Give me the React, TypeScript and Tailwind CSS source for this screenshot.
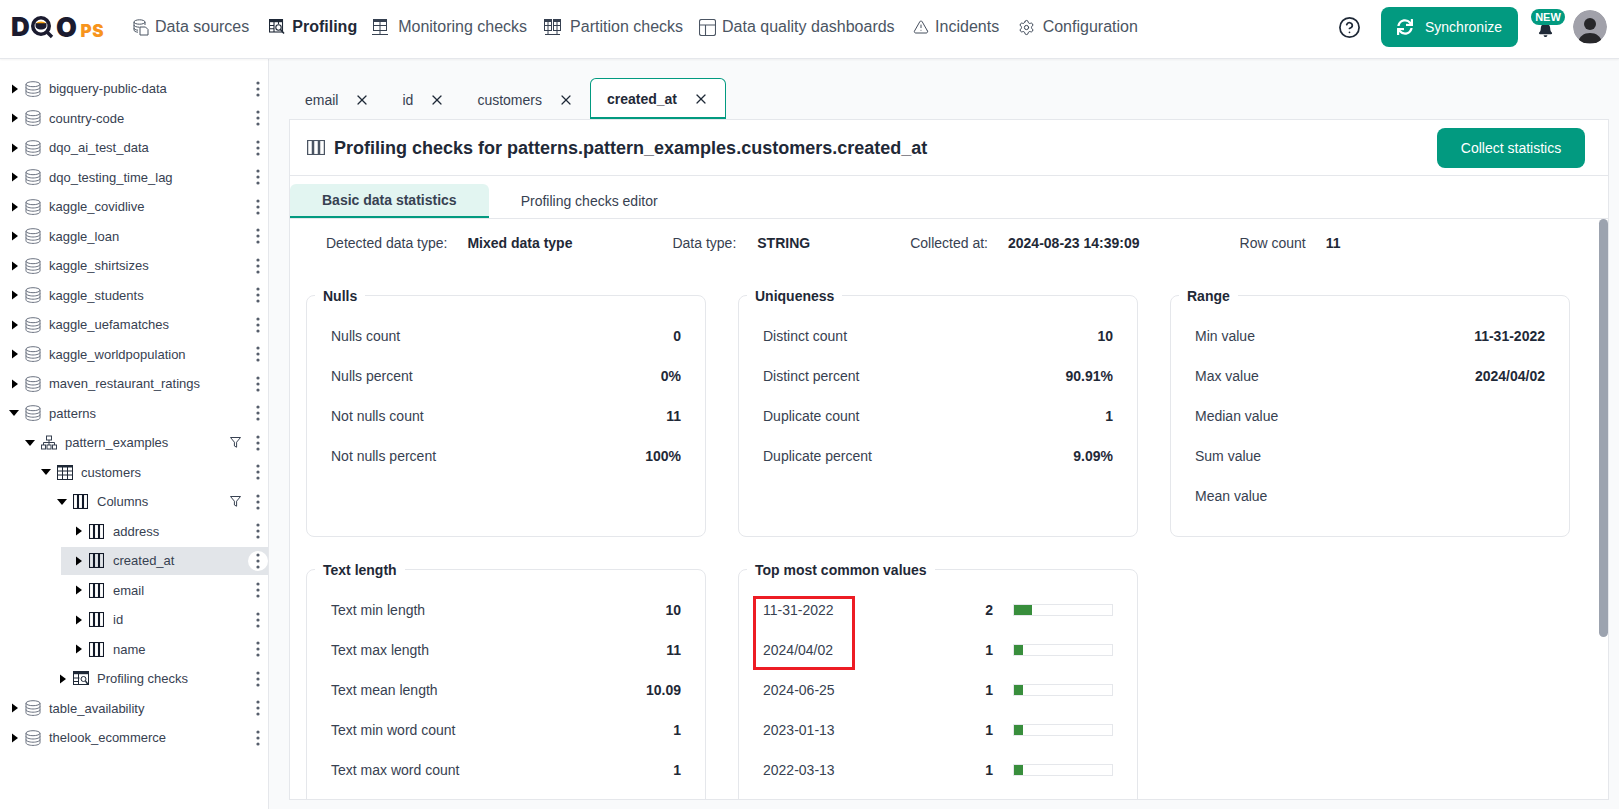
import React from "react";
import { X, TriangleAlert, Settings, CircleHelp } from "lucide-react";
import { FaSync, FaBell } from "react-icons/fa";

const Db = () => (
  <svg width="16" height="16" viewBox="0 0 16 16" fill="none" stroke="#6b7280" strokeWidth="1">
    <ellipse cx="8" cy="3.2" rx="7" ry="2.5" />
    <path d="M1 3.2v9.6c0 1.4 3.1 2.6 7 2.6s7-1.2 7-2.6V3.2" />
    <path d="M1 6.4c0 1.4 3.1 2.6 7 2.6s7-1.2 7-2.6" />
    <path d="M1 9.6c0 1.4 3.1 2.6 7 2.6s7-1.2 7-2.6" />
  </svg>
);
const Cols = ({ c = "#111827", w = 15 }: { c?: string; w?: number }) => (
  <svg width={w} height="15" viewBox="0 0 15 15" preserveAspectRatio="none" fill="none" stroke={c} strokeWidth="1.1">
    <rect x="0.5" y="0.5" width="4" height="14" />
    <rect x="5.5" y="0.5" width="4" height="14" />
    <rect x="10.5" y="0.5" width="4" height="14" />
  </svg>
);
const Tbl = () => (
  <svg width="16" height="15" viewBox="0 0 16 15" fill="none" stroke="#1f2937" strokeWidth="1">
    <rect x="0.5" y="0.5" width="15" height="14" />
    <path d="M0.5 1.5h15" strokeWidth="2" />
    <path d="M0.5 6h15M0.5 10h15M5.5 1v13M10.5 1v13" />
  </svg>
);
const Schema = () => (
  <svg width="16" height="15" viewBox="0 0 16 15" fill="none" stroke="#374151" strokeWidth="1">
    <rect x="5.5" y="1" width="5" height="4" />
    <rect x="0.5" y="10" width="4" height="4" />
    <rect x="6" y="10" width="4" height="4" />
    <rect x="11.5" y="10" width="4" height="4" />
    <path d="M8 5v5M2.5 10V7.5h11V10" />
  </svg>
);
const ProfTree = () => (
  <svg width="16" height="15" viewBox="0 0 16 15" fill="none" stroke="#1f2937" strokeWidth="1">
    <rect x="0.5" y="0.5" width="15" height="13" />
    <path d="M0.5 2h15" strokeWidth="2.4" />
    <path d="M0.5 7h6M0.5 10.5h5M5.5 3v10" />
    <circle cx="10.5" cy="8" r="2.5" />
    <path d="M12.5 10l2.5 3.5" strokeWidth="1.4" />
  </svg>
);
const Kebab = () => (
  <svg width="4" height="16" viewBox="0 0 4 16" fill="#565e6b">
    <circle cx="2" cy="2" r="1.6" />
    <circle cx="2" cy="8" r="1.6" />
    <circle cx="2" cy="14" r="1.6" />
  </svg>
);
const Funnel = () => (
  <svg width="11" height="11" viewBox="0 0 11 11" fill="none" stroke="#374151" strokeWidth="1">
    <path d="M0.5 0.5h10L6.6 5.2v5L4.4 9V5.2z" />
  </svg>
);
const Right = () => (
  <svg width="10" height="10" viewBox="0 0 10 10"><path d="M3 0.5l6 4.5-6 4.5z" fill="#000" /></svg>
);
const Down = () => (
  <svg width="10" height="10" viewBox="0 0 10 10"><path d="M0 2h10L5 8z" fill="#000" /></svg>
);

const NavData = () => (
  <svg width="16" height="17" viewBox="0 0 16 17" fill="none" stroke="#4b5563" strokeWidth="1">
    <ellipse cx="6.5" cy="3" rx="5.5" ry="2.2" />
    <path d="M1 3v8c0 1.1 1.6 2 4 2.2M12 3v3M1 6c0 1.2 2.4 2.2 5.5 2.2M1 9c0 1.1 1.6 2 4 2.2" />
    <path d="M7 8h5.5l2.5 2.5V16H7z" fill="#fff" />
  </svg>
);
const NavProf = () => (
  <svg width="16" height="16" viewBox="0 0 16 16" fill="none" stroke="#1f2937" strokeWidth="1.1">
    <rect x="0.5" y="0.5" width="13" height="12.5" />
    <path d="M0.5 2h13" strokeWidth="2.4" />
    <path d="M0.5 6.5h5M0.5 9.8h4M5 3v10M9.5 3v2" />
    <circle cx="9.5" cy="8.5" r="2.7" fill="#fff" />
    <path d="M11.5 10.5l3.5 4" strokeWidth="1.5" />
  </svg>
);
const NavMon = () => (
  <svg width="16" height="17" viewBox="0 0 16 17" fill="none" stroke="#374151" strokeWidth="1">
    <rect x="1.5" y="0.5" width="13" height="11" />
    <path d="M1.5 2h13" strokeWidth="2" />
    <path d="M1.5 6.5h13M8 2v9.5M8 11.5v3.5M0 15.5h16" />
  </svg>
);
const NavPart = () => (
  <svg width="17" height="17" viewBox="0 0 17 17" fill="none" stroke="#374151" strokeWidth="1">
    <rect x="0.5" y="0.5" width="7" height="11" />
    <rect x="9.5" y="0.5" width="7" height="11" />
    <path d="M0.5 2h7M9.5 2h7" strokeWidth="2" />
    <path d="M0.5 6.5h7M9.5 6.5h7M4 2v9.5M13 2v9.5M4 11.5v3.5M13 11.5v3.5M1 15.5h15" />
  </svg>
);
const NavDash = () => (
  <svg width="17" height="17" viewBox="0 0 17 17" fill="none" stroke="#4b5563" strokeWidth="1.1">
    <rect x="0.5" y="0.5" width="16" height="16" rx="2" />
    <path d="M0.5 6h16M6.5 6v10.5" />
  </svg>
);

const nav: { label: string; icon: React.ReactNode; bold?: boolean; cls: string }[] = [
  { label: "Data sources", icon: <NavData />, cls: "ml-0 gap-[6px]" },
  { label: "Profiling", icon: <NavProf />, bold: true, cls: "ml-[19px] gap-[7px]" },
  { label: "Monitoring checks", icon: <NavMon />, cls: "ml-[14px] gap-[10px]" },
  { label: "Partition checks", icon: <NavPart />, cls: "ml-[17px] gap-[9px]" },
  { label: "Data quality dashboards", icon: <NavDash />, cls: "ml-[16px] gap-[6px]" },
  { label: "Incidents", icon: <TriangleAlert size={16} strokeWidth={1.4} color="#374151" />, cls: "ml-[18px] gap-[5.5px]" },
  { label: "Configuration", icon: <Settings size={17} strokeWidth={1.4} color="#374151" />, cls: "ml-[18.5px] gap-[8px]" },
];

type Row = { label: string; level: number; open?: boolean; icon: string; filter?: boolean; selected?: boolean };
const tree: Row[] = [
  ...[
    "bigquery-public-data",
    "country-code",
    "dqo_ai_test_data",
    "dqo_testing_time_lag",
    "kaggle_covidlive",
    "kaggle_loan",
    "kaggle_shirtsizes",
    "kaggle_students",
    "kaggle_uefamatches",
    "kaggle_worldpopulation",
    "maven_restaurant_ratings",
  ].map((label) => ({ label, level: 0, icon: "db" })),
  { label: "patterns", level: 0, open: true, icon: "db" },
  { label: "pattern_examples", level: 1, open: true, icon: "schema", filter: true },
  { label: "customers", level: 2, open: true, icon: "table" },
  { label: "Columns", level: 3, open: true, icon: "cols", filter: true },
  { label: "address", level: 4, icon: "cols" },
  { label: "created_at", level: 4, icon: "cols", selected: true },
  { label: "email", level: 4, icon: "cols" },
  { label: "id", level: 4, icon: "cols" },
  { label: "name", level: 4, icon: "cols" },
  { label: "Profiling checks", level: 3, icon: "prof" },
  { label: "table_availability", level: 0, icon: "db" },
  { label: "thelook_ecommerce", level: 0, icon: "db" },
];
const pads = ["pl-[9px]", "pl-[25px]", "pl-[41px]", "pl-[57px]", "ml-[61px] pl-[12px]"];
const treeIcon = (k: string) =>
  k === "db" ? <Db /> : k === "schema" ? <Schema /> : k === "table" ? <Tbl /> : k === "prof" ? <ProfTree /> : <span className="w-4 flex"><Cols /></span>;

const tabs = ["email", "id", "customers"];

const Card = ({ title, children, cls }: { title: string; children: React.ReactNode; cls: string }) => (
  <fieldset className={`border border-[#e5e7eb] rounded-lg px-6 pt-3 min-w-0 ${cls}`}>
    <legend className="-ml-4 px-2 text-sm font-bold text-[#1f2937] leading-[17px] translate-y-px">{title}</legend>
    {children}
  </fieldset>
);
const Stat = ({ label, value }: { label: string; value?: string }) => (
  <div className="flex items-center justify-between h-10 text-sm">
    <span className="text-[#374151]">{label}</span>
    {value && <span className="font-bold text-[#1f2937]">{value}</span>}
  </div>
);
const Top = ({ label, n, pct }: { label: string; n: number; pct: string }) => (
  <div className="flex items-center h-10 text-sm">
    <span className="text-[#374151] flex-1">{label}</span>
    <span className="font-bold text-[#1f2937] mr-5">{n}</span>
    <div className="w-[100px] h-3 border border-[#e5e7eb]">
      <div className={`h-full bg-[#388e3c] ${pct}`} />
    </div>
  </div>
);

export default function App() {
  return (
    <div className="h-screen flex flex-col overflow-hidden bg-white text-[#374151] [font-family:Liberation_Sans,sans-serif]">
      <header className="h-[59px] shrink-0 flex items-center border-b border-[#e5e7eb] shadow-[0_1px_2px_rgba(0,0,0,0.05)] pl-[11px] pr-3 pb-1 relative z-10">
        <div className="flex items-center w-[93px] h-[24px] text-[#1b1b2f]">
          <span className="[font-family:Inter,sans-serif] font-black text-[26px] leading-none w-[18px]">D</span>
          <svg width="27" height="24" viewBox="0 0 27 24" className="shrink-0">
            <circle cx="12" cy="11" r="8.2" fill="#fff" stroke="#1b1b2f" strokeWidth="3.6" />
            <path d="M6.5 8h11v3c0 2-2.4 3.6-5.5 3.6S6.5 13 6.5 11z" fill="#1b1b2f" />
            <path d="M7 8.2a5.5 3 0 0 1 10 0z" fill="#f59e0b" />
            <path d="M18 17l5 5" stroke="#1b1b2f" strokeWidth="3.4" />
          </svg>
          <span className="[font-family:Inter,sans-serif] font-black text-[27px] leading-none w-[22px]">O</span>
          <span className="[font-family:Inter,sans-serif] font-black text-[17px] leading-none text-[#f7941d] mt-[9px] ml-[3px] tracking-[0.5px]">PS</span>
        </div>
        <nav className="flex items-center ml-[28px] text-base text-[#4b5563]">
          {nav.map((n) => (
            <div key={n.label} className={`flex items-center ${n.cls} ${n.bold ? "font-bold text-[#1f2937]" : ""}`}>
              <span className="w-[17px] flex justify-center">{n.icon}</span>
              <span>{n.label}</span>
            </div>
          ))}
        </nav>
        <div className="ml-auto flex items-center">
          <CircleHelp size={23} strokeWidth={1.8} color="#1f2937" />
          <button className="ml-[20px] h-10 w-[137px] rounded-lg bg-[#029a80] text-white text-sm flex items-center pl-4 gap-3">
            <FaSync size={16} />
            Synchronize
          </button>
          <div className="relative w-[55px] h-10 flex items-center justify-center">
            <FaBell size={15} color="#1f2937" className="mt-1" />
            <span className="absolute top-[2px] left-[13px] w-[34px] h-4 rounded-full bg-[#029a80] text-white text-[11px] font-bold flex items-center justify-center">NEW</span>
          </div>
          <svg width="34" height="34" viewBox="0 0 34 34" className="rounded-full">
            <circle cx="17" cy="17" r="17" fill="#a1a1aa" />
            <circle cx="17" cy="14" r="6" fill="#27272a" />
            <path d="M5 33c1-7 6-10 12-10s11 3 12 10z" fill="#27272a" />
          </svg>
        </div>
      </header>

      <div className="flex-1 flex min-h-0">
        <aside className="w-[269px] shrink-0 border-r border-[#e5e7eb] pt-[15px] text-[13px] text-[#374151]">
          {tree.map((r) => (
            <div
              key={r.label}
              className={`flex items-center ${pads[r.level]} ${r.selected ? "bg-[#e2e5e9] h-[28px] my-[0.75px]" : "h-[29.5px]"}`}
            >
              <span className="w-[10px] flex">{r.open ? <Down /> : <Right />}</span>
              <span className="ml-[6px] flex">{treeIcon(r.icon)}</span>
              <span className="ml-2">{r.label}</span>
              {r.filter && <span className="ml-auto flex mr-[7px]"><Funnel /></span>}
              <span className={`${r.filter ? "" : "ml-auto"} w-5 h-5 flex items-center justify-center rounded-full ${r.selected ? "bg-white" : ""}`}>
                <Kebab />
              </span>
            </div>
          ))}
        </aside>

        <main className="flex-1 min-w-0 bg-[#f9fafb] pt-[19px] pl-5 pr-[10px] pb-[9px] flex flex-col">
          <div className="flex h-[41px] shrink-0 text-sm">
            {tabs.map((t) => (
              <div key={t} className="flex items-center gap-4 px-4 pt-0.5">
                <span>{t}</span>
                <X size={16} strokeWidth={1.8} color="#1f2937" />
              </div>
            ))}
            <div className="flex items-center gap-4 px-4 pt-0.5 bg-white border border-b-2 border-[#029a80] rounded-t-md font-bold text-[#1f2937]">
              <span>created_at</span>
              <X size={16} strokeWidth={1.8} color="#1f2937" />
            </div>
          </div>

          <section className="flex-1 min-h-0 bg-white border border-[#e5e7eb] flex flex-col">
            <div className="h-[56px] shrink-0 border-b border-[#e5e7eb] flex items-center pl-[17px] pr-[23px]">
              <Cols c="#4b5563" w={18} />
              <h1 className="ml-[9px] text-lg font-bold text-[#1f2937]">Profiling checks for patterns.pattern_examples.customers.created_at</h1>
              <button className="ml-auto h-10 w-[148px] rounded-lg bg-[#029a80] text-white text-sm">Collect statistics</button>
            </div>
            <div className="h-[43px] shrink-0 border-b border-[#e5e7eb] flex items-end text-sm pt-2">
              <div className="h-[34px] px-8 flex items-center bg-[#e2f5f1] border-b-2 border-[#029a80] rounded-t-md font-bold text-[#374151]">Basic data statistics</div>
              <div className="h-[34px] px-8 flex items-center text-[#374151]">Profiling checks editor</div>
            </div>
            <div className="flex-1 min-h-0 overflow-hidden relative pl-4">
              <div className="absolute right-0 top-0 w-[9px] h-[418px] rounded-full bg-[#9ca3af]" />
              <div className="h-[48px] flex items-center text-sm pl-5">
                <span>Detected data type:</span>
                <span className="ml-5 font-bold text-[#1f2937]">Mixed data type</span>
                <span className="ml-[100px]">Data type:</span>
                <span className="ml-[21px] font-bold text-[#1f2937]">STRING</span>
                <span className="ml-[100px]">Collected at:</span>
                <span className="ml-5 font-bold text-[#1f2937]">2024-08-23 14:39:09</span>
                <span className="ml-[100px]">Row count</span>
                <span className="ml-5 font-bold text-[#1f2937]">11</span>
              </div>
              <div className="mt-[20px] grid grid-cols-[400px_400px_400px] gap-x-8 gap-y-6">
                <Card title="Nulls" cls="h-[250px]">
                  <Stat label="Nulls count" value="0" />
                  <Stat label="Nulls percent" value="0%" />
                  <Stat label="Not nulls count" value="11" />
                  <Stat label="Not nulls percent" value="100%" />
                </Card>
                <Card title="Uniqueness" cls="h-[250px]">
                  <Stat label="Distinct count" value="10" />
                  <Stat label="Distinct percent" value="90.91%" />
                  <Stat label="Duplicate count" value="1" />
                  <Stat label="Duplicate percent" value="9.09%" />
                </Card>
                <Card title="Range" cls="h-[250px]">
                  <Stat label="Min value" value="11-31-2022" />
                  <Stat label="Max value" value="2024/04/02" />
                  <Stat label="Median value" />
                  <Stat label="Sum value" />
                  <Stat label="Mean value" />
                </Card>
                <Card title="Text length" cls="h-[300px]">
                  <Stat label="Text min length" value="10" />
                  <Stat label="Text max length" value="11" />
                  <Stat label="Text mean length" value="10.09" />
                  <Stat label="Text min word count" value="1" />
                  <Stat label="Text max word count" value="1" />
                </Card>
                <Card title="Top most common values" cls="h-[300px]">
                  <div className="relative">
                    <Top label="11-31-2022" n={2} pct="w-[18%]" />
                    <Top label="2024/04/02" n={1} pct="w-[9%]" />
                    <Top label="2024-06-25" n={1} pct="w-[9%]" />
                    <Top label="2023-01-13" n={1} pct="w-[9%]" />
                    <Top label="2022-03-13" n={1} pct="w-[9%]" />
                    <div className="absolute -left-[10px] top-[6px] w-[102px] h-[74px] border-[3px] border-[#ed1c24]" />
                  </div>
                </Card>
              </div>
            </div>
          </section>
        </main>
      </div>
    </div>
  );
}
